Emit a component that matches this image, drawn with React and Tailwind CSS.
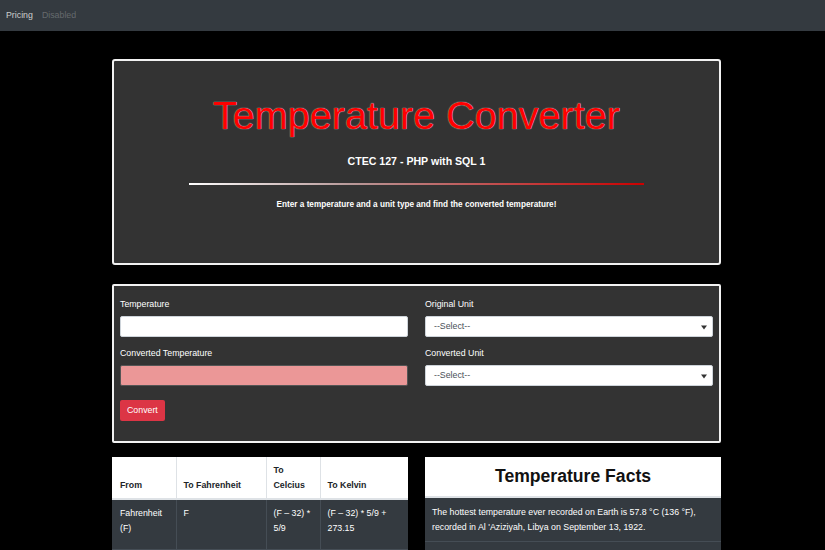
import React from "react";

function SelectBox() {
  return (
    <div className="flex h-[21px] items-center justify-between rounded-[2px] border border-[#ced4da] bg-white pl-[8px] pr-[5px]">
      <span className="text-[8.8px] leading-[13px] text-[#495057]">--Select--</span>
      <svg width="6" height="5" viewBox="0 0 6 5" className="mt-[1px]">
        <path d="M0 0.5 H6 L3 4.5 Z" fill="#333" />
      </svg>
    </div>
  );
}

export default function App() {
  return (
    <div className="min-h-[550px] bg-black font-['Liberation_Sans',Arial,sans-serif] text-white">
      {/* Navbar */}
      <nav className="flex h-[31px] items-center gap-[9px] bg-[#343a40] px-[6px] text-[8.8px]">
        <span className="text-[rgba(255,255,255,0.75)]">Pricing</span>
        <span className="text-[rgba(255,255,255,0.25)]">Disabled</span>
      </nav>

      <div className="ml-[112px] w-[609px] pt-[28px]">
        {/* Jumbotron */}
        <div className="flex flex-col items-center rounded-[3px] border-2 border-[#f2f2f2] bg-[#333333] pt-[30px] pb-[51px]">
          <h1 className="text-[39.6px] leading-[48px] font-normal text-[#ff0000] [text-shadow:0_0_1px_#bbbbbb,0_0_1px_#bbbbbb]">
            Temperature Converter
          </h1>
          <h5 className="mt-[15px] text-[10.6px] leading-[14px] font-bold text-white">CTEC 127 - PHP with SQL 1</h5>
          <div className="mt-[15px] h-[2px] w-[455px] bg-[linear-gradient(to_right,#ffffff,#b89a9a_35%,#cc0000)]" />
          <p className="mt-[13px] text-[8.2px] leading-[14px] font-bold text-white">
            Enter a temperature and a unit type and find the converted temperature!
          </p>
        </div>

        {/* Form */}
        <div className="mt-[19px] rounded-[2px] border-2 border-[#f2f2f2] bg-[#333333] px-[6px] pt-[11px] pb-[20px]">
          <div className="grid grid-cols-2 gap-[17px]">
            <div>
              <label className="block text-[8.8px] leading-[14px]">Temperature</label>
              <div className="mt-[5px] h-[21px] rounded-[2px] border border-[#ced4da] bg-white" />
              <label className="mt-[9px] block text-[8.8px] leading-[14px]">Converted Temperature</label>
              <div className="mt-[5px] h-[21px] rounded-[2px] border border-[#555] bg-[#eb9797]" />
              <button className="mt-[14px] h-[21px] rounded-[2px] bg-[#dc3545] px-[7px] text-[8.8px] leading-[13px] text-white">
                Convert
              </button>
            </div>
            <div>
              <label className="block text-[8.8px] leading-[14px]">Original Unit</label>
              <div className="mt-[5px]">
                <SelectBox />
              </div>
              <label className="mt-[9px] block text-[8.8px] leading-[14px]">Converted Unit</label>
              <div className="mt-[5px]">
                <SelectBox />
              </div>
            </div>
          </div>
        </div>

        {/* Bottom row */}
        <div className="mt-[14px] grid grid-cols-2 gap-[17px] text-[8.8px] leading-[15px]">
          <table className="w-full table-fixed border-collapse">
            <thead>
              <tr className="bg-white text-[#212529]">
                <th className="w-[64px] border-b-2 border-[#dee2e6] pt-[6px] pb-[5px] pl-[8px] text-left align-bottom font-bold">From</th>
                <th className="w-[90px] border-b-2 border-l border-[#dee2e6] pt-[6px] pb-[5px] pl-[7px] text-left align-bottom font-bold">To Fahrenheit</th>
                <th className="w-[54px] border-b-2 border-l border-[#dee2e6] pt-[6px] pb-[5px] pl-[7px] pr-[6px] text-left align-bottom font-bold">To Celcius</th>
                <th className="w-[88px] border-b-2 border-l border-[#dee2e6] pt-[6px] pb-[5px] pl-[7px] text-left align-bottom font-bold">To Kelvin</th>
              </tr>
            </thead>
            <tbody className="bg-[#343a40] text-white">
              <tr className="border-b border-[#454d55]">
                <td className="py-[6px] pl-[8px] pr-[4px] align-top">Fahrenheit (F)</td>
                <td className="border-l border-[#454d55] py-[6px] pl-[7px] align-top">F</td>
                <td className="border-l border-[#454d55] py-[6px] pl-[7px] pr-[4px] align-top">(F – 32) * 5/9</td>
                <td className="border-l border-[#454d55] py-[6px] pl-[7px] pr-[4px] align-top">(F – 32) * 5/9 + 273.15</td>
              </tr>
              <tr className="border-b border-[#454d55]">
                <td className="py-[8px] pl-[8px] pr-[4px] align-top">Celsius (C)</td>
                <td className="border-l border-[#454d55] py-[8px] pl-[7px] align-top">(C * 9/5) + 32</td>
                <td className="border-l border-[#454d55] py-[8px] pl-[7px] pr-[4px] align-top">C</td>
                <td className="border-l border-[#454d55] py-[8px] pl-[7px] pr-[4px] align-top">C + 273.15</td>
              </tr>
            </tbody>
          </table>

          <div className="flex flex-col">
            <div className="flex h-[41px] items-center justify-center border-b-2 border-[#dee2e6] bg-white">
              <h2 className="text-[17.6px] leading-[21px] font-bold text-[#111]">Temperature Facts</h2>
            </div>
            <div className="border-b border-[#454d55] bg-[#343a40] px-[7px] pt-[7px] pb-[6px] text-white">
              The hottest temperature ever recorded on Earth is 57.8 °C (136 °F), recorded in Al 'Aziziyah, Libya on September 13, 1922.
            </div>
            <div className="border-b border-[#454d55] bg-[#343a40] px-[7px] pt-[8px] pb-[6px] text-white">
              The coldest temperature ever recorded on Earth is −89.2 °C (−128.6 °F), at Vostok Station, Antarctica in 1983.
            </div>
          </div>
        </div>
      </div>
    </div>
  );
}
